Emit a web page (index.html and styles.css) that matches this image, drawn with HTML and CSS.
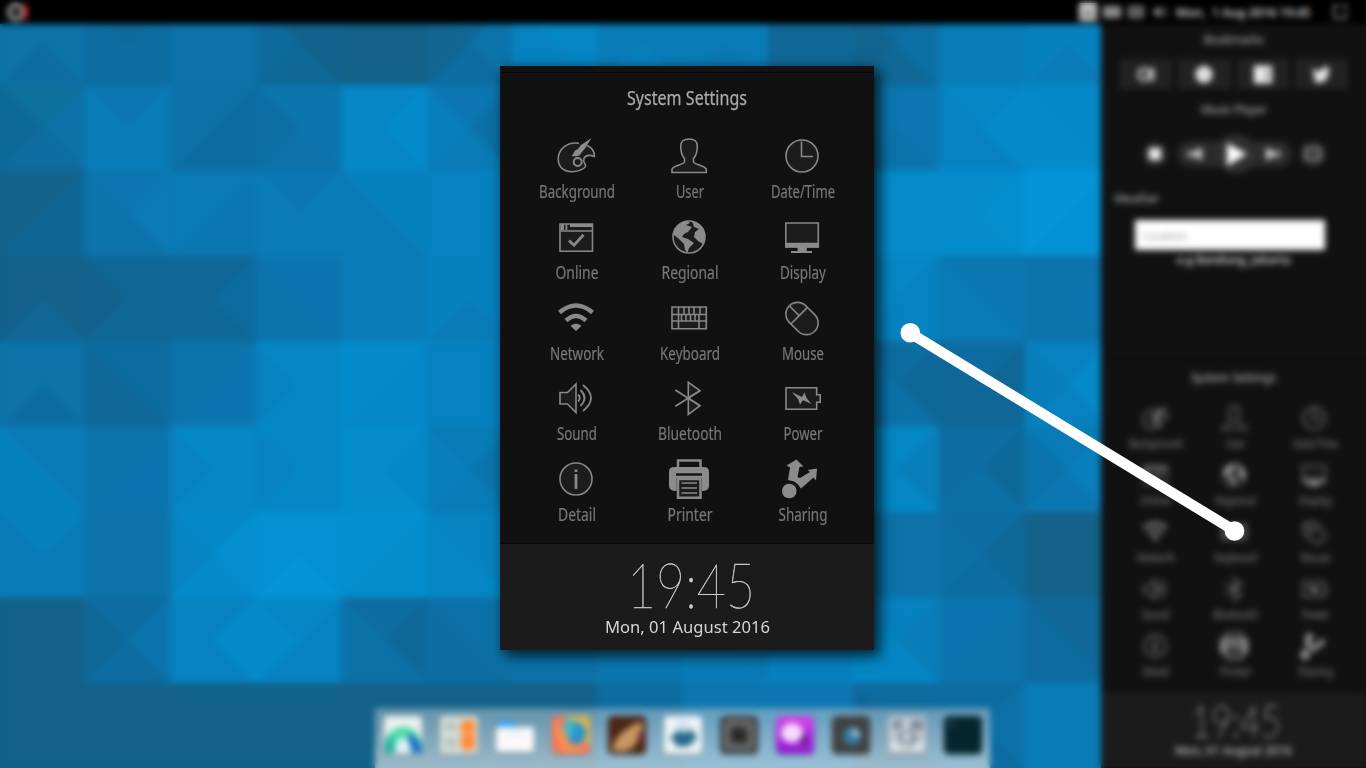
FILE: index.html
```html
<!DOCTYPE html>
<html lang="en">
<head>
<meta charset="utf-8">
<title>System Settings</title>
<link rel="stylesheet" href="styles.css">
</head>
<body>
<div class="desktop">
  <svg class="wallpaper" viewBox="0 0 1366 768" shape-rendering="crispEdges"></svg>

  <header class="topbar">
    <svg class="logo" viewBox="0 0 24 20"><circle cx="9" cy="10" r="6.8" fill="none" stroke="#999" stroke-width="4.5"/><path d="M17 3q4 7 0 14" fill="none" stroke="#c22" stroke-width="4"/></svg>
    <div class="tray">
      <svg viewBox="0 0 18 18"><rect width="18" height="18" rx="2" fill="#ccc"/><path d="M5 14V10h8v4" fill="none" stroke="#555" stroke-width="2.5"/></svg>
      <svg viewBox="0 0 18 18"><path d="M0 3h18v12H0z" fill="#999"/><path d="M2 7h14M2 11h14" stroke="#555"/></svg>
      <svg viewBox="0 0 18 18"><path d="M2 4h14v10H2zM5 7h8v4H5z" fill="none" stroke="#999" stroke-width="1.8"/></svg>
      <svg viewBox="0 0 18 18"><path d="M2 7h3l5-4v12l-5-4H2z" fill="#999"/><path d="M13 4q4 5 0 10" fill="none" stroke="#777" stroke-width="2"/></svg>
      <time>Mon, &nbsp;1 Aug 2016 19:45</time>
      <svg class="session" viewBox="0 0 18 18"><path d="M8 3H3v12h12V9M11 3h4v4" fill="none" stroke="#888" stroke-width="1.8"/></svg>
    </div>
  </header>

  <div class="workspace">
    <nav class="dock">
      <svg viewBox="0 0 38 38"><rect width="38" height="38" rx="4" fill="#edf0ef"/><path d="M1 37C-3 3 41 1 38 37z" fill="#4cdda8"/><path d="M1 37Q0 23 8 17q0 12 5 20z" fill="#22ae9e"/><path d="M24 18q13 2 14 19H23z" fill="#1d71c3"/><path d="M11 38q0-16 8-16t8 16z" fill="#e2f0f5"/></svg>
      <svg viewBox="0 0 38 38"><rect width="38" height="38" rx="4" fill="#dde2dc"/><path d="M4 5h14v11H4zM4 21h14v11H4z" fill="#b9c9c1"/><rect x="21" y="4" width="14" height="30" rx="4" fill="#ff8938"/><path d="M21 18h14" stroke="#ffae73" stroke-width="3"/></svg>
      <svg viewBox="0 0 38 38"><path d="M2 4h14l5 6h15v14H2z" fill="#39a2e8"/><rect y="11" width="38" height="25" rx="3" fill="#fafafa"/><path d="M8 17h20" stroke="#ddd" stroke-width="2"/></svg>
      <svg viewBox="0 0 38 38"><rect width="38" height="38" rx="5" fill="#f87958"/><path d="M12 0h21q5 0 5 5v24q-8-3-10-15z" fill="#e7b64a"/><circle cx="22" cy="17" r="12" fill="#2793cc"/><path d="M14 2l12 4-6 5 3 7-9 6-5-8z" fill="#45b7c8"/><path d="M1 8q12 3 16 18 8 7 17 2-8 10-22 8z" fill="#fd914c"/></svg>
      <svg viewBox="0 0 38 38"><rect width="38" height="38" rx="5" fill="#4b2617"/><path d="M4 34Q6 18 31 6q8 2-1 19-8 14-26 9z" fill="#c69962"/><path d="M32 14q5 3 1 12h-5z" fill="#762b44"/></svg>
      <svg viewBox="0 0 38 38"><rect width="38" height="38" rx="4" fill="#f0f4f5"/><path d="M14 5h10l4 12H10z" fill="#cbdfeb"/><path d="M6 21l8-6 9 2 5-4 5 9-8 8-11 1z" fill="#24698c"/></svg>
      <svg viewBox="0 0 38 38"><rect width="38" height="38" rx="5" fill="#444"/><rect x="7" y="7" width="24" height="24" rx="2" fill="none" stroke="#888" stroke-width="3"/><path d="M13 13h8q5 2 5 12H13z" fill="#242424"/></svg>
      <svg viewBox="0 0 38 38"><defs><linearGradient id="chat" x2="0" y2="1"><stop stop-color="#d744ee"/><stop offset="1" stop-color="#8b1bd0"/></linearGradient></defs><rect width="38" height="38" rx="5" fill="url(#chat)"/><path d="M24 17q10-1 6 11l-9-3z" fill="#551070"/><ellipse cx="16" cy="17" rx="11" ry="10" fill="#f7dafa"/></svg>
      <svg viewBox="0 0 38 38"><rect width="38" height="38" rx="5" fill="#414141"/><circle cx="20" cy="20" r="9" fill="#337ba7"/><path d="M20 12q7 1 8 8l-7 1z" fill="#b2cbdc"/></svg>
      <svg viewBox="0 0 38 38"><rect width="38" height="38" rx="4" fill="#c2c9d0"/><path d="M5 4h9v9H5zM23 4h12v10H23zM10 17l13-2 8 7-7 8-5-5-8 4z" fill="#7b899b"/><path d="M3 26h9v8H3zM26 26h9v8h-9zM15 18h8v6h-8z" fill="#e0e4e7"/></svg>
      <svg viewBox="0 0 38 38"><rect width="38" height="38" rx="5" fill="#05262e"/><path d="M5 6l4 3" stroke="#558080" stroke-width="2"/></svg>
    </nav>

    <aside class="sidebar">
      <section class="widgets">
        <h2 class="widget-title">Bookmarks</h2>
        <div class="bookmarks">
          <button><svg viewBox="0 0 22 20"><circle cx="9" cy="10" r="6" fill="none" stroke="#ccc" stroke-width="3.5"/><path d="M16 3h4v14h-4z" fill="#ccc"/></svg></button>
          <button><svg viewBox="0 0 22 20"><circle cx="11" cy="10" r="9.5" fill="#e8e8e8"/><path d="M9 9h4l-1 6" fill="none" stroke="#aaa" stroke-width="1.5"/></svg></button>
          <button><svg viewBox="0 0 22 20"><rect x="1" width="20" height="20" rx="1" fill="#eee"/><path d="M17 4h-2v14M13 10h5" fill="none" stroke="#777" stroke-width="2"/></svg></button>
          <button><svg viewBox="0 0 22 20"><path d="M2 2q4 5 9 5 0-6 6-5l4 1-2 4q0 12-12 12l-5-2 4-2q-4-3-4-13z" fill="#eee"/></svg></button>
        </div>
        <h2 class="widget-title music">Music Player</h2>
        <div class="player">
          <svg viewBox="0 0 190 44">
            <circle cx="17" cy="22" r="12.5" fill="#292929"/><path d="M11 16h12v12H11z" fill="#eee"/>
            <rect x="39" y="9" width="115" height="26" rx="13" fill="#2a2a2a"/><circle cx="98" cy="22" r="19.5" fill="#303030"/>
            <path d="M51 18v8M63 17l-10 5 10 5zM129 17l10 5-10 5zM141 18v8" fill="#ccc" stroke="#ccc" stroke-width="2"/><path d="M89 11l20 11-20 12z" fill="#fff"/>
            <circle cx="175" cy="22" r="12.5" fill="#303030"/><path d="M168 17h14v10h-14z" fill="none" stroke="#888" stroke-width="2.5"/>
          </svg>
        </div>
        <h2 class="widget-title weather">Weather</h2>
        <input class="location" placeholder="Location" aria-label="Location">
        <p class="hint">e.g Bandung, Jakarta</p>
      </section>
      <section class="settings settings-mini"></section>
    </aside>
  </div>
  <div class="defocus"></div>

  <svg class="pointer" viewBox="0 0 1366 768"><path d="M910 333L1235 531" stroke="#fff" stroke-width="10.5"/><circle cx="910.3" cy="332.7" r="9.8" fill="#fff"/><circle cx="1234.5" cy="531" r="9.8" fill="#fff"/></svg>
  <section class="settings settings-front"></section>
</div>
<script src="main.js"></script>
</body>
</html>
```
FILE: styles.css
```css
* { box-sizing: border-box; }
body { margin: 0; overflow: hidden; background: #000; font-family: "Noto Sans", "Open Sans", sans-serif; }
.desktop { position: relative; width: 1366px; height: 768px; overflow: hidden; display: flex; flex-direction: column; isolation: isolate; }
.wallpaper, .pointer, .defocus { position: absolute; inset: 0; width: 1366px; height: 768px; }
.wallpaper { z-index: -1; }
.defocus { backdrop-filter: blur(3px); }

.topbar { height: 24px; background: #000; display: flex; justify-content: space-between; align-items: center; padding: 0 17px 0 7px; }
.logo { width: 24px; height: 20px; }
.tray { display: flex; align-items: center; gap: 6px; }
.tray svg { width: 18px; height: 18px; }
.tray time { width: 136px; color: #ccc; font-size: 12.5px; font-weight: 600; letter-spacing: -0.2px; white-space: nowrap; text-align: center; }
.tray .session { margin-left: 14px; }

.workspace { flex: 1; display: flex; justify-content: space-between; align-items: flex-end; padding-left: 375px; }
.dock { width: 615px; height: 60px; padding: 8px 8px 0 9px; display: flex; justify-content: space-between; background: linear-gradient(rgba(190, 200, 205, .48), rgba(215, 225, 230, .7)); }
.dock svg { width: 38px; height: 38px; filter: drop-shadow(0 1px 1px rgba(0, 0, 0, .35)); }

.sidebar { width: 265px; height: 744px; background: #111; display: flex; flex-direction: column; overflow: hidden; }
.widgets { height: 330px; flex: none; display: flex; flex-direction: column; align-items: center; }
.widget-title { margin: 8px 0 0; height: 16px; font-size: 12px; line-height: 16px; font-weight: 500; color: #999; letter-spacing: -0.55px; }
.bookmarks { display: flex; gap: 6px; margin-top: 11px; }
.bookmarks button { width: 52.5px; height: 30px; border: 0; padding: 0; background: #222; display: grid; place-items: center; }
.bookmarks svg { width: 20px; height: 19px; }
.music { margin-top: 13px; }
.player { width: 190px; height: 44px; margin: 14px 2px 0 0; }
.player svg { display: block; width: 190px; height: 44px; }
.weather { width: 239px; margin-top: 15px; }
.location { width: 190px; height: 30px; margin: 13px 7px 0 0; border: 0; background: #fff; padding: 0 8px; font: 11px "Noto Sans", sans-serif; }
.location::placeholder { color: #999; }
.hint { margin: 2px 0 0; font-size: 11.5px; line-height: 16px; font-weight: 700; color: #aaa; letter-spacing: -0.3px; }

.settings { width: 374px; height: 584px; display: flex; flex-direction: column; background: #111; }
.settings-front { position: absolute; left: 500px; top: 66px; box-shadow: 5px 5px 13px 1px rgba(0, 0, 0, .75); }
.settings-mini { zoom: .7065; flex: none; }
.settings-strip { height: 7px; border-bottom: 1px solid #070707; background: #121212; flex: none; }
.settings-title { height: 46px; flex: none; display: flex; justify-content: center; }
.settings-title svg { width: 160px; height: 46px; overflow: visible; }
.tiles { display: grid; grid-template-columns: repeat(3, 113px); grid-auto-rows: 80.7px; margin-left: 19.6px; padding-top: 17.4px; height: 424px; }
.tile { display: flex; flex-direction: column; align-items: center; }
.tile-icon { width: 40px; height: 40px; fill: #1c1c1c; stroke: #888; stroke-width: 1.6; }
.tile-label { width: 110px; height: 28px; overflow: visible; }
.tile-label text { font-size: 17.3px; fill: #777; stroke: #777; stroke-width: .2; text-anchor: middle; }
.settings-title text { font-size: 19px; fill: #aaa; stroke: #aaa; stroke-width: .25; text-anchor: middle; }
.settings-footer { height: 107px; background: #1b1b1b; border-top: 1px solid #0a0a0a; }
.settings-footer svg { display: block; width: 374px; height: 106px; }
.clock { font-family: Lato, sans-serif; font-weight: 100; font-size: 61px; fill: #ccc; stroke: #ccc; stroke-width: .5; }
.date { font-size: 16.8px; fill: #d5d5d5; }
.tile-icon .solid { fill: #8b8b8b; stroke: none; }
.tile-icon .line { fill: none; }
```
FILE: main.js
```js
// Wallpaper shades, dark to light; each cell lists its top, right, bottom and left facets.
const shades = {
  a: [18, 98, 138], b: [15, 103, 151], c: [13, 108, 161], d: [12, 114, 169], e: [11, 118, 176], f: [9, 123, 182],
  g: [7, 129, 191], h: [5, 135, 198], i: [4, 140, 204], j: [4, 144, 210], k: [4, 149, 216], u: [13, 112, 153]
};
const rows = [
  'ddcd bccc dddd aabc aaaa beca hhgg ffgf ffef bbbb cdba ffff ggfg',
  'udcb efff dccd eedc hihh ecfg gggg gggg gggg gggg eede higg hhii',
  'abba efdd feef efff ggff gggg gggg gggg gggg gggg iiii ijii kjjk',
  'aaba bbba bcbb eedd ffff ggfg gggg gggg gggg gggg hggh eeff dedd',
  'ddcd ccbb deed hhhg ihhi gggg gggg gggg gggg gggg cbdd cbbb gigf',
  'ffgg deed hhhg hhhg ihii fdfg gggg gggg gggg gggg hfhh cbdc fged',
  'gfff dddd hjig jjkj jiij gghh gggg gggg gggg gggg dddd cbcd aaaa',
  'aaaa cecb gigg hggi cbdd ddcc dddd eeee eeff gggg gfhh edde bbcc',
  'aaaa aaaa aaaa aaaa aaaa aaaa aaaa cccc eeee eeee ccab cdcc ffff'
];
const size = 1366 / 16;
let facets = '';
rows.forEach((row, r) => row.split(' ').forEach((cell, c) => {
  const x = c * size, y = r * size, X = x + size, Y = y + size, m = x + size / 2, n = y + size / 2;
  const edges = [[x, y, X, y], [X, y, X, Y], [X, Y, x, Y], [x, Y, x, y]];
  const mean = [0, 1, 2].map(ch => [...cell].reduce((sum, k) => sum + shades[k][ch], 0) / 4);
  edges.forEach((e, k) => {
    const colour = `rgb(${shades[cell[k]].map((v, ch) => Math.round(v * 0.7 + mean[ch] * 0.3)).join()})`;
    facets += `<path d="M${e[0]} ${e[1]}L${e[2]} ${e[3]}L${m} ${n}z" fill="${colour}" stroke="${colour}" stroke-width=".6"/>`;
  });
}));
document.querySelector('.wallpaper').innerHTML = facets;

// Each entry: label, label width, icon drawing on a 40 by 40 grid.
const tiles = [
  ['Background', 76, '<path d="M23 7.3C10 5.5 2.2 14 2.2 23C2.2 32 9 36.2 17 35.7C25 35 30 31.5 29.6 29.5C29.3 27.5 26.5 26 28 22.5C29.5 19 33 18.5 38.3 20.5C39 15 35 11 31 9.5"/><circle cx="21.7" cy="26" r="4" stroke-width="2"/><path class="solid" d="M35.5 2L25 9L21.5 13.5C18.5 13 18 18 15.5 20C20 21 24.5 20 25.5 16.5L29 12.5z"/>'],
  ['User', 28, '<path d="M3 36.5V33C5 29 14 29 15.5 26V22.5C11.5 18 11.7 14 11.7 10C11.7 5.5 15 3 20 3C25 3 28.3 5.5 28.3 10C28.3 14 28.5 18 24.5 22.5V26C26 29 35 29 37.3 33V36.5z"/>'],
  ['Date/Time', 64, '<circle cx="20" cy="20" r="16"/><path class="line" d="M19.5 5.5V20.5H31"/>'],
  ['Online', 43, '<path d="M4 7h32.5v27.3H4zM4 14h32.5"/><path class="solid" d="M14 7h22v3H14zM5 7h3v6H5zM9.5 7h1.8v6H9.5z"/><path class="line" stroke-width="2.8" d="M13 23.5l5 4.7 9.5-10.5"/>'],
  ['Regional', 57, '<circle cx="20" cy="20" r="16"/><path class="solid" d="M5 15Q9 5 18 4L21 6L17 8L23 10L19 15L15 17L13 20L19 22L25 26L20 31L18.5 36L16 33L15 27L10 22L5 18zM23 4Q30 5 34 12L36 20L34 27L29 24L25 20L26 15L30 12L25 10z"/>'],
  ['Display', 46, '<path d="M3.8 6h32.5v24H3.8z"/><path class="solid" d="M3.5 25.7h33v4.8h-33zM15.5 30h9.3v4H30v2H9v-2h6.5z"/>'],
  ['Network', 54, '<path class="line" stroke-width="4.5" d="M3.5 14.5Q20 .5 36.5 14.5M10 22.5Q20 13.5 30 22.5"/><path class="solid" d="M14.5 27.8Q20 23.5 25.5 27.8L20 33z"/>'],
  ['Keyboard', 60, '<path d="M3 9h34.3v21.7H3zM3 16.5h34.3M3 23h34.3M9.5 9v14M15 9v7.5M20 9v7.5M25 9v7.5M31 9v7.5M12.5 16.5v6.5M17 16.5v6.5M21.5 16.5v6.5M26 16.5v6.5M30 16.5v14.2M9.5 23v7.7"/>'],
  ['Mouse', 42, '<g transform="translate(20 20.5) rotate(-45)"><rect x="-11.7" y="-18" width="23.4" height="36" rx="11.7"/><path class="line" d="M-11.7 -4h23.4M0 -18V-4"/></g>'],
  ['Sound', 40, '<path d="M4 14.5h7.5L20 6v28.5L11.5 26H4z"/><path class="line" stroke-width="1.8" d="M22 16.5q3.5 3.5 0 7M24.5 12q8 8 0 16M27 7q16 13 0 26"/>'],
  ['Bluetooth', 64, '<path d="M19.3 20V4.3L31 12.7zM19.3 20V36.3L31 27.7z"/><path class="line" d="M6.3 12L31 27.7M6.3 28.3L31 12.7"/>'],
  ['Power', 39, '<path d="M4 9.7h30.7v7h3.5v7.6h-3.5v7H4z"/><path class="solid" d="M10 14.3L20 19L22.5 14.5L24.5 20L29.5 26L21 22.2L18 26.5L16 21z"/>'],
  ['Detail', 38, '<circle cx="20" cy="20" r="16"/><path class="line" stroke-width="2.8" d="M20 10.5v2.5M20 15v15"/>'],
  ['Printer', 45, '<path class="line" stroke-width="2.5" d="M9 9V1.5h22.5V9"/><path class="solid" d="M5 8h30q5 0 5 5v14q0 5-7 5V19H7.7v13Q0 32 0 27V13q0-5 5-5z"/><path d="M7 15.5h26" stroke="#171717" stroke-width="2.5"/><path d="M9 20h22.5v18.7H9z" stroke-width="2.5"/><path class="line" stroke-width="1.5" d="M12.5 24h15.5M12.5 29h15.5M12.5 34h15.5"/>'],
  ['Sharing', 49, '<circle class="solid" cx="7.3" cy="32" r="7.3"/><path class="solid" d="M6 21L8 8.5L4.5 6.5L14.5 .5L21.5 7.5L17.5 8L15.5 18L18 19L28 13L25.5 11L35 9.5L34 21.5L31.5 18.5L19 29.5L15.5 25L12 22.5z"/>']
];
const markup = `
  <div class="settings-strip"></div>
  <div class="settings-title"><svg><text x="80" y="32.2" textLength="120" lengthAdjust="spacingAndGlyphs">System Settings</text></svg></div>
  <div class="tiles">${tiles.map(([name, width, icon]) => `
    <div class="tile"><svg class="tile-icon" viewBox="0 0 40 40">${icon}</svg>
    <svg class="tile-label"><text x="56" y="22" textLength="${width}" lengthAdjust="spacingAndGlyphs">${name}</text></svg></div>`).join('')}
  </div>
  <div class="settings-footer"><svg>
    <text class="clock" x="127" y="64" textLength="128" lengthAdjust="spacingAndGlyphs">19:45</text>
    <text class="date" x="105" y="88.8" textLength="165" lengthAdjust="spacingAndGlyphs">Mon, 01 August 2016</text>
  </svg></div>`;
document.querySelectorAll('.settings').forEach(panel => { panel.innerHTML = markup; });
```
